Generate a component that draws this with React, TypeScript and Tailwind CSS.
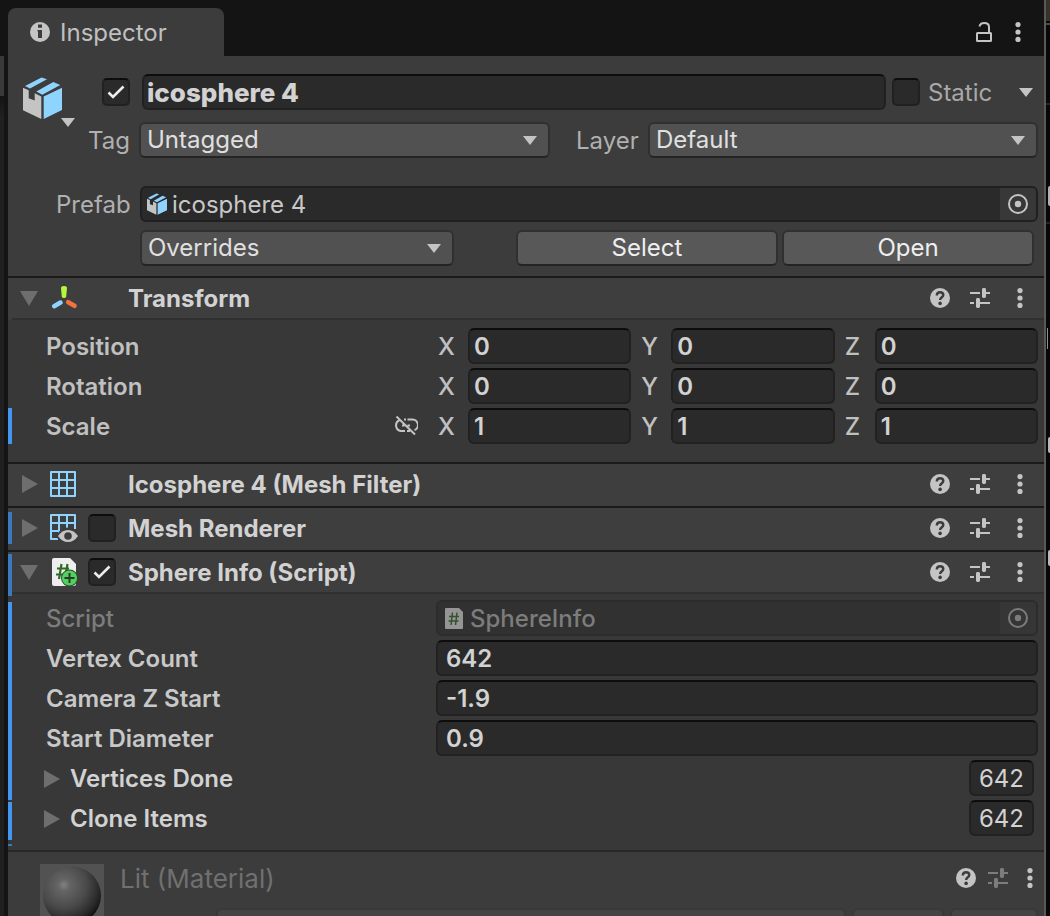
import { useState } from "react";
import type { ReactNode } from "react";

const FIELD =
  "h-9 w-full min-w-0 rounded-md border-2 border-[#212121] border-t-[#0d0d0d] bg-[#2a2a2a] text-[#d2d2d2] outline-none";

function CaretDown({ className = "" }: { className?: string }) {
  return (
    <svg viewBox="0 0 14 9" className={`h-[9px] w-3.5 shrink-0 fill-[#c4c4c4] ${className}`} aria-hidden="true">
      <path d="M0 0h14L7 9z" />
    </svg>
  );
}

function PrefabIcon({ className }: { className: string }) {
  return (
    <svg viewBox="0 0 39 42" className={className} aria-hidden="true">
      <path fill="#8fd3ff" d="M2 9 18.5.5 24 2.2 7 11.5zM13.3 14.5 30.3 5l7 3-18 9.8zM20.7 19.5 39 10.7V33L20.7 42z" />
      <path fill="#c4c4c4" d="M0 10.7l5.7 2.6v8l6 2.2v-7.2l6.6 3.2V42L0 33.3z" />
    </svg>
  );
}

function HelpIcon() {
  return (
    <svg viewBox="0 0 20 20" className="size-5" aria-hidden="true">
      <circle cx="10" cy="10" r="10" fill="#c4c4c4" />
      <path d="M6.800 7.400C6.800 5.200 8.100 4.200 10 4.200s3.300 1.100 3.300 2.800c0 2.300-3.200 2.300-3.200 5" fill="none" stroke="#3c3c3c" strokeWidth="2.400" />
      <circle cx="10.1" cy="15.400" r="1.800" fill="#3c3c3c" />
    </svg>
  );
}

function PresetIcon() {
  return (
    <svg viewBox="0 0 20 20" className="size-5" fill="currentColor" aria-hidden="true">
      <path d="M0 4h10v2H0zM16 4h4v2h-4zM0 14h4v2H0zM10 14h10v2H10z" />
      <rect x="12" y="0" width="4" height="10" rx="1.4" />
      <rect x="6" y="10" width="4" height="10" rx="1.4" />
    </svg>
  );
}

function DotsIcon() {
  return (
    <svg viewBox="0 0 6 20" className="h-5 w-1.5" fill="#c4c4c4" aria-hidden="true">
      <circle cx="3" cy="2.6" r="2.6" />
      <circle cx="3" cy="10" r="2.6" />
      <circle cx="3" cy="17.4" r="2.6" />
    </svg>
  );
}

function TargetIcon() {
  return (
    <svg viewBox="0 0 20 20" className="size-5" aria-hidden="true">
      <circle cx="10" cy="10" r="9" fill="none" stroke="currentColor" strokeWidth="2" />
      <circle cx="10" cy="10" r="3.2" fill="currentColor" />
    </svg>
  );
}

function TransformIcon() {
  return (
    <svg viewBox="0 0 28 24" className="h-6 w-7" aria-hidden="true">
      <path d="M11 2q0-2 3-2t3 2l-.8 8.500q-.2 1.500-2.200 1.500t-2.200-1.500z" fill="#b5f63e" />
      <path d="M4.200 20.200 10.500 16.600" stroke="#8fd3ff" strokeWidth="4.600" strokeLinecap="round" />
      <path d="M24.500 19.800 18.200 16.200" stroke="#f2713c" strokeWidth="4.600" strokeLinecap="round" />
    </svg>
  );
}

function MeshIcon() {
  return (
    <svg viewBox="0 0 26 26" className="size-[26px]" aria-hidden="true">
      <path d="M1 1h24v24H1zM9 1v24M17 1v24M1 9h24M1 17h24" fill="none" stroke="#8fd3ff" strokeWidth="2" strokeLinejoin="round" />
    </svg>
  );
}

function RendererIcon() {
  return (
    <svg viewBox="0 0 28 28" className="size-7" aria-hidden="true">
      <path d="M8 25H1V1h24v14M9 1v24M17 1v14M1 9h24M1 17h9" fill="none" stroke="#8fd3ff" strokeWidth="2" strokeLinejoin="round" />
      <path d="M6 22q4.500-8.500 12-8.500T30 22q-4.500 8-12 8T6 22z" fill="#3c3c3c" />
      <path d="M8 22q4-6 10-6t10 6q-4 6-10 6T8 22z" fill="#c4c4c4" />
      <circle cx="18" cy="22" r="3.800" fill="#3c3c3c" />
    </svg>
  );
}

function ScriptIcon() {
  return (
    <svg viewBox="0 0 28 28" className="size-7" aria-hidden="true">
      <path d="M4 0h16l6 6v20q0 2-2 2H4q-2 0-2-2V2q0-2 2-2z" fill="#eeeeee" />
      <path d="M11.500 6 9 21M17.500 6 15 21M7 10.500h12M6 16.500h12" stroke="#2f6b24" strokeWidth="2.200" />
      <circle cx="19.500" cy="20" r="8.500" fill="#2c4a30" />
      <circle cx="19.500" cy="20" r="7.600" fill="#4fd15c" />
      <path d="M19.500 15v10M14.500 20h10" stroke="#2a3a2c" strokeWidth="2" />
    </svg>
  );
}

function ScriptFileIcon() {
  return (
    <svg viewBox="0 0 18 21" className="h-[21px] w-[18px] shrink-0" aria-hidden="true">
      <path d="M1 0h13l4 4v16q0 1-1 1H1q-1 0-1-1V1q0-1 1-1z" fill="#959595" />
      <path d="M7.500 4.500 6 17M12 4.500 10.500 17M4 8.500h10M3.500 13h10" stroke="#35522f" strokeWidth="1.500" />
    </svg>
  );
}

function UnlinkIcon() {
  return (
    <svg viewBox="0 0 24 20" className="h-5 w-6" fill="none" stroke="#c4c4c4" strokeWidth="2" aria-hidden="true">
      <path d="M5.500 4.200A5.700 5.700 0 0 0 6.500 15H11M10 3.500h2M13.500 3.500h4a5.600 5.600 0 0 1 3 10.700M13 15h3M8 9.500h2.500M13.500 9.500H16M2.500 .5l18.500 18" />
    </svg>
  );
}

function Foldout({ open, className = "" }: { open: boolean; className?: string }) {
  return (
    <svg viewBox="0 0 18 18" className={`size-[18px] shrink-0 fill-[#6e6e6e] ${className}`} aria-hidden="true">
      {open ? <path d="M0 2h18L9 17z" /> : <path d="M2 0v18l16-9z" />}
    </svg>
  );
}

function Checkbox({ label, initial = false }: { label: string; initial?: boolean }) {
  const [on, setOn] = useState(initial);
  return (
    <label className="grid size-7 shrink-0 place-items-center">
      <input
        type="checkbox"
        aria-label={label}
        checked={on}
        onChange={() => setOn(!on)}
        className="col-start-1 row-start-1 size-7 appearance-none rounded-[5px] border-2 border-[#212121] border-t-[#0d0d0d] bg-[#2a2a2a]"
      />
      {on && (
        <svg viewBox="0 0 18 14" className="pointer-events-none col-start-1 row-start-1 h-3.5 w-[18px]" aria-hidden="true">
          <path d="M1.500 7.500 6 12 16.500 1.500" fill="none" stroke="#ededed" strokeWidth="2.600" />
        </svg>
      )}
    </label>
  );
}

function Dropdown({ id, label, value }: { id: string; label?: string; value: string }) {
  return (
    <div className="grid items-center">
      <select
        id={id}
        aria-label={label}
        className="col-start-1 row-start-1 h-9 w-full appearance-none rounded-md border-2 border-[#303030] border-b-[#242424] bg-[#515151] pr-8 pb-0.5 pl-1.5 text-2xl leading-8 text-[#e0e0e0] outline-none"
      >
        <option>{value}</option>
      </select>
      <CaretDown className="pointer-events-none col-start-1 row-start-1 mr-[13px] justify-self-end" />
    </div>
  );
}

function PanelButton({ children }: { children: ReactNode }) {
  return (
    <button
      type="button"
      className="h-9 w-full rounded-md border-2 border-[#303030] border-b-[#242424] bg-[#585858] pb-0.5 text-2xl leading-8 text-[#eeeeee]"
    >
      {children}
    </button>
  );
}

function HeaderTools() {
  return (
    <div className="flex items-center gap-5 text-[#c4c4c4]">
      <button type="button" aria-label="Help"><HelpIcon /></button>
      <button type="button" aria-label="Presets"><PresetIcon /></button>
      <button type="button" aria-label="More options" className="flex w-5 justify-center"><DotsIcon /></button>
    </div>
  );
}

interface ComponentHeaderProps {
  title: string;
  icon: ReactNode;
  open?: boolean;
  toggle?: ReactNode;
  bar?: ReactNode;
}

function ComponentHeader({ title, icon, open = false, toggle, bar }: ComponentHeaderProps) {
  return (
    <div className="flex border-t-2 border-[#1a1a1a] bg-[#3e3e3e]">
      <div className="flex w-1 shrink-0 flex-col">{bar}</div>
      <div
        className={
          open
            ? "flex h-[42px] flex-1 items-center border-b-2 border-[#303030] pr-3.5 pl-2"
            : "flex h-[42px] flex-1 items-center pr-3.5 pb-0.5 pl-2"
        }
      >
        <button type="button" aria-label={`Toggle ${title}`} aria-expanded={open}>
          <Foldout open={open} />
        </button>
        <div className="ml-3 flex w-7 shrink-0">{icon}</div>
        <div className="ml-2.5 w-7 shrink-0">{toggle}</div>
        <h2 className="ml-3 flex-1 pt-0.5 text-2xl leading-8 font-bold text-[#d2d2d2]">{title}</h2>
        <HeaderTools />
      </div>
    </div>
  );
}

function VectorRow({ name, values, linked = false }: { name: string; values: [string, string, string]; linked?: boolean }) {
  return (
    <div className="flex h-9 items-center pr-1.5">
      <div className={linked ? "w-1 shrink-0 self-stretch bg-[#4296ef]" : "w-1 shrink-0"} />
      <div className="flex w-[426px] shrink-0 items-center justify-between pr-5 pl-[34px]">
        <span className="pt-0.5 text-2xl leading-8 font-semibold text-[#c0c0c0]">{name}</span>
        {linked && (
          <button type="button" aria-label="Constrain proportions"><UnlinkIcon /></button>
        )}
      </div>
      <div className="grid flex-1 grid-cols-3 gap-2.5">
        {(["X", "Y", "Z"] as const).map((axis, i) => (
          <label key={axis} className="flex items-center">
            <span className="w-[30px] shrink-0 pt-0.5 text-2xl leading-8 font-medium text-[#c0c0c0]">{axis}</span>
            <input aria-label={`${name} ${axis}`} defaultValue={values[i]} className={`${FIELD} pl-1 text-2xl font-semibold`} />
          </label>
        ))}
      </div>
    </div>
  );
}

function PropertyRow({ id, name, value }: { id: string; name: string; value: string }) {
  return (
    <div className="flex h-9 items-center">
      <label htmlFor={id} className="w-[390px] shrink-0 pt-0.5 text-2xl leading-8 font-semibold text-[#c8c8c8]">{name}</label>
      <input id={id} defaultValue={value} className={`${FIELD} pl-2 text-2xl font-semibold`} />
    </div>
  );
}

function ListRow({ name, count }: { name: string; count: string }) {
  return (
    <div className="flex h-9 items-center pr-1">
      <button type="button" aria-expanded={false} className="-ml-1 flex flex-1 items-center gap-2.5 pt-0.5 text-2xl leading-8 font-semibold text-[#d2d2d2]">
        <Foldout open={false} />
        {name}
      </button>
      <div className="w-[65px] shrink-0">
        <input aria-label={`${name} size`} defaultValue={count} className={`${FIELD} text-center text-2xl`} />
      </div>
    </div>
  );
}

function ObjectHeader() {
  return (
    <section className="bg-[#3c3c3c] pt-[18px] pr-1.5 pb-2.5">
      <div className="flex">
        <button type="button" aria-label="Select icon" className="flex h-[54px] w-20 shrink-0 items-end pt-1 pb-px pl-[15px]">
          <PrefabIcon className="mb-2 h-[42px] w-[39px]" />
          <CaretDown className="-ml-px" />
        </button>
        <div className="flex flex-1 flex-col gap-3">
          <div className="flex h-9 items-center">
            <div className="ml-3.5"><Checkbox label="Active" initial /></div>
            <input
              aria-label="Object name"
              defaultValue="icosphere 4"
              className={`${FIELD} ml-3 flex-1 pl-[3px] text-[26px] font-extrabold`}
            />
            <div className="ml-1.5 flex w-[146px] shrink-0 items-center">
              <Checkbox label="Static" />
              <span className="ml-2 flex-1 pt-0.5 text-2xl leading-8 text-[#a8a8a8]">Static</span>
              <button type="button" aria-label="Static options" className="mr-[5px]"><CaretDown /></button>
            </div>
          </div>
          <div className="flex h-9 items-center">
            <label htmlFor="tag" className="w-[51px] shrink-0 pt-0.5 text-2xl leading-8 text-[#b0b0b0]">Tag</label>
            <div className="flex-[411]"><Dropdown id="tag" value="Untagged" /></div>
            <label htmlFor="layer" className="w-[98px] shrink-0 pt-0.5 pl-[26px] text-2xl leading-8 text-[#b0b0b0]">Layer</label>
            <div className="flex-[390]"><Dropdown id="layer" value="Default" /></div>
          </div>
        </div>
      </div>

      <div className="mt-7 flex h-9 items-center">
        <span className="w-[132px] shrink-0 pt-0.5 pl-12 text-2xl leading-8 text-[#b0b0b0]">Prefab</span>
        <div className="flex h-9 flex-1 items-center overflow-hidden rounded-md border-2 border-[#202020] bg-[#2a2a2a] pl-[5px]">
          <PrefabIcon className="h-[22px] w-5 shrink-0" />
          <span className="ml-[5px] flex-1 pt-0.5 text-2xl leading-8 text-[#c8c8c8]">icosphere 4</span>
          <button type="button" aria-label="Pick prefab" className="flex h-8 w-9 items-center justify-center bg-[#383838] text-[#c4c4c4]">
            <TargetIcon />
          </button>
        </div>
      </div>

      <div className="mt-2 flex h-9 pr-1 pl-[132px]">
        <div className="flex-[314]"><Dropdown id="overrides" label="Overrides" value="Overrides" /></div>
        <div className="ml-[62px] flex-[262]"><PanelButton>Select</PanelButton></div>
        <div className="ml-1 flex-[252]"><PanelButton>Open</PanelButton></div>
      </div>
    </section>
  );
}

function TabBar() {
  return (
    <header className="flex h-14 shrink-0 items-end justify-between bg-[#141414]">
      <div className="flex h-12 w-[216px] items-center gap-2.5 rounded-t-lg bg-[#3c3c3c] pl-[22px]">
        <svg viewBox="0 0 20 20" className="size-5" aria-hidden="true">
          <circle cx="10" cy="10" r="10" fill="#c4c4c4" />
          <path d="M7.500 8H12v8H8V9.500h-.5zM8 2.500h4v3.200H8z" fill="#3c3c3c" />
        </svg>
        <h1 className="pt-0.5 text-2xl leading-8 text-[#c0c0c0]">Inspector</h1>
      </div>
      <div className="flex h-12 items-center gap-[23px] pr-[23px]">
        <button type="button" aria-label="Lock inspector">
          <svg viewBox="0 0 16 20" className="h-5 w-4" fill="none" stroke="#c4c4c4" strokeWidth="2" aria-hidden="true">
            <rect x="1" y="11" width="14" height="8" rx="0.500" />
            <path d="M3.500 4.500C4 2 6 1 8.200 1 11 1 13 2.500 13 5v6" />
          </svg>
        </button>
        <button type="button" aria-label="Window options"><DotsIcon /></button>
      </div>
    </header>
  );
}

function MaterialSection() {
  return (
    <section className="flex flex-1 overflow-hidden border-t-2 border-[#282828] bg-[#3c3c3c] pt-2.5 pl-8">
      <svg viewBox="0 0 64 64" className="mt-0.5 size-16 shrink-0" aria-hidden="true">
        <defs>
          <radialGradient id="ball" cx="0.360" cy="0.320" r="0.720">
            <stop offset="0" stopColor="#828282" />
            <stop offset="0.140" stopColor="#656565" />
            <stop offset="0.550" stopColor="#494949" />
            <stop offset="0.850" stopColor="#292929" />
            <stop offset="1" stopColor="#121212" />
          </radialGradient>
        </defs>
        <path d="M0 0h64v64H0z" fill="#525252" />
        <circle cx="32" cy="31.500" r="29" fill="url(#ball)" />
      </svg>
      <div className="flex flex-1 flex-col">
        <div className="flex h-8 items-center pr-[11px] pl-4">
          <h2 className="flex-1 pt-0.5 text-[26px] leading-8 text-[#707070]">Lit (Material)</h2>
          <div className="flex items-center text-[#7d7d7d]">
            <button type="button" aria-label="Help"><HelpIcon /></button>
            <button type="button" aria-label="Presets" className="ml-3"><PresetIcon /></button>
            <button type="button" aria-label="More options" className="ml-[19px]"><DotsIcon /></button>
          </div>
        </div>
        <div className="mt-3.5 flex gap-1.5 pr-1.5 pl-28">
          <button type="button" aria-label="Shader" className="h-9 flex-[630] rounded-md border-2 border-[#393939] bg-[#444444]" />
          <button type="button" aria-label="Edit shader" className="h-9 w-[92px] rounded-md border-2 border-[#393939] bg-[#444444]" />
          <button type="button" aria-label="Shader list" className="h-9 w-[88px] rounded-md border-2 border-[#393939] bg-[#444444]" />
        </div>
      </div>
    </section>
  );
}

function LeftEdge() {
  return (
    <div className="flex w-2 shrink-0 flex-col border-r-4 border-[#141414] bg-[#202020]">
      <div className="h-14 bg-[#141414]" />
      <div className="h-10 bg-[#3a3a3a]" />
      <div className="h-5 bg-linear-to-b from-[#141414] to-[#202020]" />
    </div>
  );
}

function RightEdge() {
  return (
    <div className="flex w-1 shrink-0 flex-col overflow-hidden bg-[#080808]" aria-hidden="true">
      <div className="h-[21px] bg-[#38332a]" />
      <div className="mt-0.5 h-0.5 bg-[#4a4a4a]" />
      <div className="mt-[78px] h-0.5 bg-[#242424]" />
      <div className="mt-[81px] ml-0.5 h-5 rounded-l-full bg-[#b0b0b0]" />
      <div className="mt-4 h-0.5 bg-[#242424]" />
      <div className="mt-[104px] ml-px h-[21px] w-px bg-[#909090]" />
      <div className="mt-[88px] ml-0.5 h-4 rounded-l-full bg-[#b8b8b8]" />
      <div className="mt-[97px] ml-0.5 h-4 rounded-l-full bg-[#b8b8b8]" />
    </div>
  );
}

export default function App() {
  return (
    <div className="flex h-screen overflow-hidden bg-[#141414] font-['Inter','Liberation_Sans',sans-serif]">
      <LeftEdge />
      <main className="flex min-w-0 flex-1 flex-col border-r-2 border-[#595959] bg-[#383838]">
        <TabBar />
        <ObjectHeader />

        <section>
          <ComponentHeader title="Transform" open icon={<TransformIcon />} />
          <div className="flex flex-col gap-1 pt-2 pb-[18px]">
            <VectorRow name="Position" values={["0", "0", "0"]} />
            <VectorRow name="Rotation" values={["0", "0", "0"]} />
            <VectorRow name="Scale" values={["1", "1", "1"]} linked />
          </div>
        </section>

        <ComponentHeader title="Icosphere 4 (Mesh Filter)" icon={<MeshIcon />} />
        <ComponentHeader
          title="Mesh Renderer"
          icon={<RendererIcon />}
          toggle={<Checkbox label="Mesh Renderer enabled" />}
          bar={<div className="mt-1 h-8 bg-[#3a79bb]" />}
        />

        <section>
          <ComponentHeader
            title="Sphere Info (Script)"
            open
            icon={<ScriptIcon />}
            toggle={<Checkbox label="Sphere Info enabled" initial />}
            bar={<div className="mt-0.5 h-10 bg-[#3a79bb]" />}
          />
          <div className="flex pb-1">
            <div className="flex w-1 shrink-0 flex-col">
              <div className="h-0.5 bg-[#3a79bb]" />
              <div className="mt-1.5 h-[198px] bg-[#4296ef]" />
              <div className="mt-0.5 h-[38px] bg-[#4296ef]" />
              <div className="mt-1 h-0.5 bg-[#3a79bb]" />
            </div>
            <div className="flex flex-1 flex-col gap-1 pt-1.5 pr-1.5 pl-[34px]">
              <div className="flex h-9 items-center">
                <span className="w-[390px] shrink-0 pt-0.5 text-2xl leading-8 font-medium text-[#7c7c7c]">Script</span>
                <div className="flex h-9 flex-1 items-center overflow-hidden rounded-md border-2 border-[#2c2c2c] bg-[#313131] pl-[7px]">
                  <ScriptFileIcon />
                  <span className="ml-[7px] flex-1 pt-0.5 text-2xl leading-8 font-medium text-[#7c7c7c]">SphereInfo</span>
                  <button type="button" aria-label="Pick script" disabled className="flex h-8 w-9 items-center justify-center bg-[#363636] text-[#7c7c7c]">
                    <TargetIcon />
                  </button>
                </div>
              </div>
              <PropertyRow id="vertex-count" name="Vertex Count" value="642" />
              <PropertyRow id="camera-z" name="Camera Z Start" value="-1.9" />
              <PropertyRow id="start-diameter" name="Start Diameter" value="0.9" />
              <ListRow name="Vertices Done" count="642" />
              <ListRow name="Clone Items" count="642" />
            </div>
          </div>
        </section>

        <MaterialSection />
      </main>
      <RightEdge />
    </div>
  );
}
